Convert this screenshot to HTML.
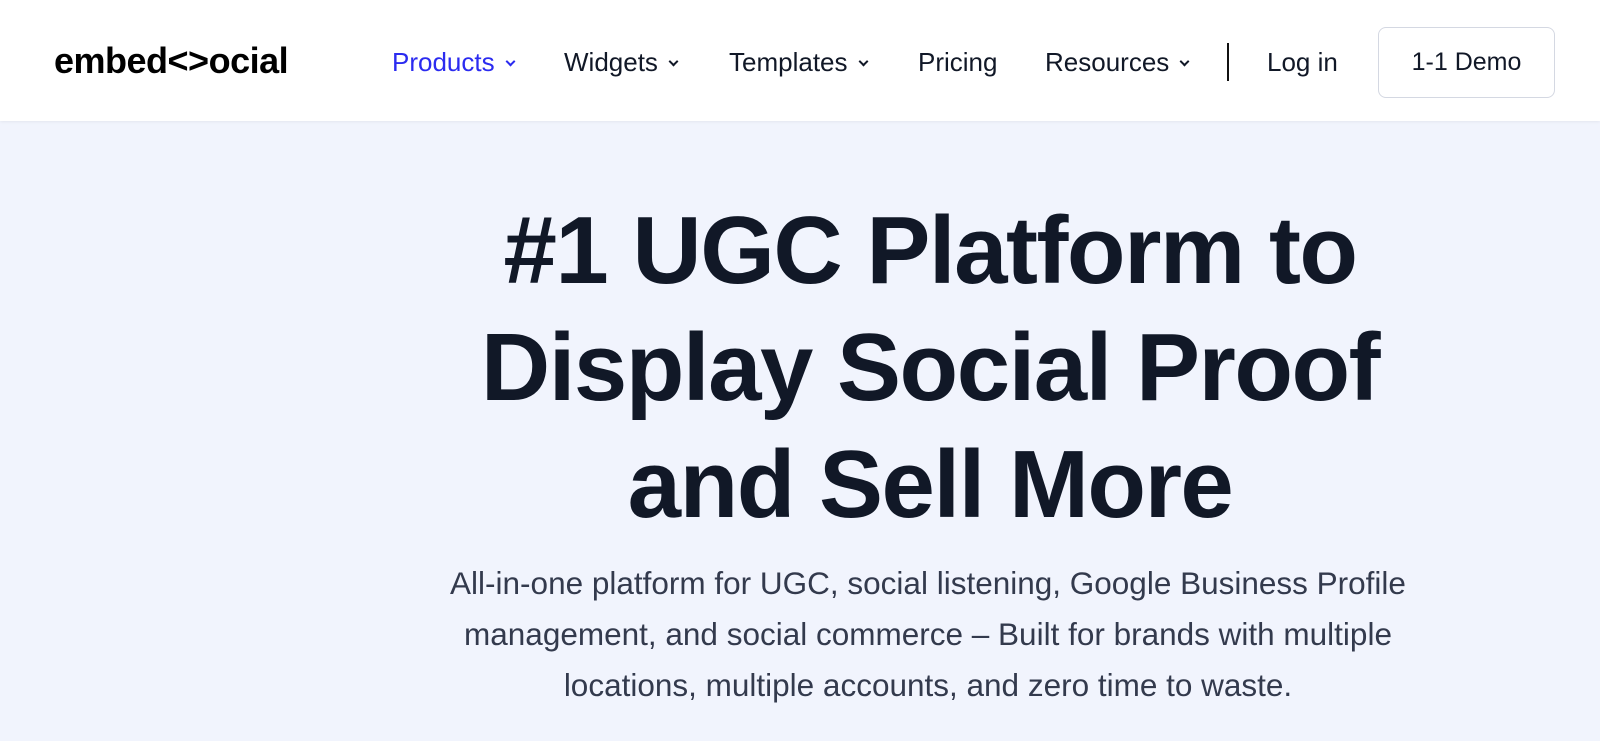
<!DOCTYPE html>
<html><head><meta charset="utf-8"><style>
*{margin:0;padding:0;box-sizing:border-box}
body{width:1600px;height:741px;overflow:hidden;background:#f1f4fd;font-family:"Liberation Sans",sans-serif;color:#111827}
header{position:absolute;top:0;left:0;width:1600px;height:121px;background:#fff;box-shadow:0 1px 3px rgba(0,0,0,.06)}
.logo{position:absolute;left:54px;top:40px;font-size:36px;font-weight:bold;letter-spacing:-0.5px;color:#000}
.nav{position:absolute;top:47px;font-size:26px;color:#111827}
.chev{display:inline-block;width:7px;height:7px;border-right:2px solid currentColor;border-bottom:2px solid currentColor;transform:rotate(45deg);margin-left:12px;position:relative;top:-6px}
.sep{position:absolute;left:1227px;top:43px;width:2px;height:38px;background:#111}
.btn{position:absolute;left:1378px;top:27px;width:177px;height:71px;border:1.5px solid #d4d8e2;border-radius:8px;font-size:25px;text-align:center;line-height:68px}
h1{position:absolute;left:0;top:192px;width:1860px;text-align:center;font-size:96px;line-height:117px;letter-spacing:-1.5px;font-weight:bold;color:#111827}
p{position:absolute;left:0;top:558px;width:1856px;text-align:center;font-size:31.5px;line-height:51px;color:#333a4d}
</style></head><body>
<header>
<div class="logo">embed&lt;&gt;ocial</div>
<div class="nav" style="left:392px;color:#2b2bf0">Products<span class="chev"></span></div>
<div class="nav" style="left:564px">Widgets<span class="chev"></span></div>
<div class="nav" style="left:729px">Templates<span class="chev"></span></div>
<div class="nav" style="left:918px">Pricing</div>
<div class="nav" style="left:1045px">Resources<span class="chev"></span></div>
<div class="sep"></div>
<div class="nav" style="left:1267px">Log in</div>
<div class="btn">1-1 Demo</div>
</header>
<h1>#1 UGC Platform to<br>Display Social Proof<br>and Sell More</h1>
<p>All-in-one platform for UGC, social listening, Google Business Profile<br>management, and social commerce – Built for brands with multiple<br>locations, multiple accounts, and zero time to waste.</p>
</body></html>
